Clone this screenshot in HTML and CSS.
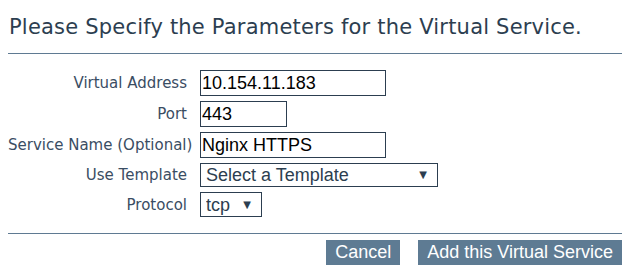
FILE: index.html
```html
<!DOCTYPE html>
<html>
<head>
<meta charset="utf-8">
<link rel="stylesheet" href="styles.css">
</head>
<body>
<div class="page">
  <h1 class="title">Please Specify the Parameters for the Virtual Service.</h1>
  <hr class="rule">
  <form class="form">
    <div class="row">
      <label class="label">Virtual Address</label>
      <input class="field field-wide" type="text" value="10.154.11.183">
    </div>
    <div class="row">
      <label class="label">Port</label>
      <input class="field field-port" type="text" value="443">
    </div>
    <div class="row">
      <label class="label">Service Name (Optional)</label>
      <input class="field field-wide" type="text" value="Nginx HTTPS">
    </div>
    <div class="row row-select">
      <label class="label">Use Template</label>
      <div class="select-wrap select-template">
        <select class="select"><option>Select a Template</option></select>
        <span class="arrow">&#9660;</span>
      </div>
    </div>
    <div class="row row-proto">
      <label class="label">Protocol</label>
      <div class="select-wrap select-proto">
        <select class="select"><option>tcp</option></select>
        <span class="arrow">&#9660;</span>
      </div>
    </div>
  </form>
  <hr class="rule rule-bottom">
  <div class="actions">
    <button class="btn" type="button">Cancel</button>
    <button class="btn" type="button">Add this Virtual Service</button>
  </div>
</div>
</body>
</html>
```

FILE: styles.css
```css
html, body {
  margin: 0;
  padding: 0;
  background: #ffffff;
}

.page {
  width: 614px;
  margin-left: 8px;
  font-family: "DejaVu Sans", "Open Sans", sans-serif;
}

.title {
  margin: 0;
  padding-top: 12px;
  padding-left: 1px;
  font-size: 21px;
  font-weight: 400;
  line-height: 30px;
  letter-spacing: 0.2px;
  color: #2c3e50;
  white-space: nowrap;
}

.rule {
  margin: 11px 0 0 0;
  border: 0;
  height: 1px;
  background: #5f7a92;
}

.form {
  margin: 16px 0 0 0;
  display: flex;
  flex-direction: column;
  gap: 5px;
}

.row {
  display: flex;
  align-items: center;
  height: 26px;
}

.row-select { height: 24px; }
.row-proto { height: 25px; }

.label {
  width: 179px;
  text-align: right;
  margin-right: 13px;
  font-size: 15px;
  color: #3a4d63;
  white-space: nowrap;
}

.field {
  box-sizing: border-box;
  height: 26px;
  margin: 0;
  padding: 0 2px 0 1px;
  border: 1px solid #2c3e50;
  border-radius: 0;
  font-family: "Liberation Sans", Arial, sans-serif;
  font-size: 18px;
  color: #000000;
  background: #ffffff;
  outline: none;
}

.field-wide { width: 186px; }
.field-port { width: 87px; }

.select-wrap {
  position: relative;
  box-sizing: border-box;
  height: 100%;
  border: 1px solid #2c3e50;
}

.select-template { width: 238px; }
.select-proto { width: 62px; }

.select {
  -webkit-appearance: none;
  appearance: none;
  box-sizing: border-box;
  width: 100%;
  height: 100%;
  margin: 0;
  padding: 0 0 0 5px;
  border: 0;
  border-radius: 0;
  background: transparent;
  font-family: "Liberation Sans", Arial, sans-serif;
  font-size: 18px;
  color: #2c3e50;
  outline: none;
}

.arrow {
  position: absolute;
  top: 50%;
  transform: translateY(-55%);
  font-family: "DejaVu Sans", sans-serif;
  font-size: 10px;
  color: #2c3e50;
  pointer-events: none;
}

.select-template .arrow { right: 10px; }
.select-proto .arrow { right: 10px; }

.rule-bottom {
  margin-top: 16px;
}

.actions {
  display: flex;
  justify-content: flex-end;
  gap: 18px;
  margin-top: 6px;
}

.btn {
  height: 25px;
  margin: 0;
  padding: 0 9px;
  border: 0;
  border-radius: 0;
  background: #5e7b93;
  color: #ffffff;
  font-family: "Liberation Sans", Arial, sans-serif;
  font-size: 18px;
  line-height: 25px;
}
```
